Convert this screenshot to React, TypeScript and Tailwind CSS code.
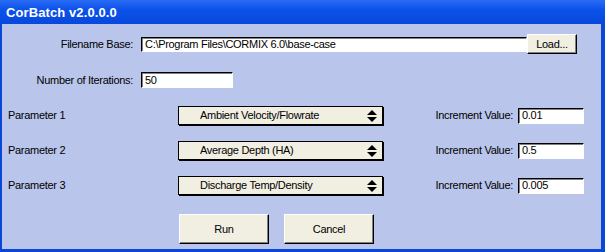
import React from "react";

const font = { fontFamily: '"Liberation Sans", Arial, sans-serif' };

function Arrows() {
  return (
    <svg width="10" height="12" viewBox="0 0 10 12" className="shrink-0">
      <polygon points="5,0 10,5 0,5" fill="#000" />
      <polygon points="0,7 10,7 5,12" fill="#000" />
    </svg>
  );
}

function Input({ value, className }: { value: string; className: string }) {
  return (
    <div
      className={
        "flex items-center bg-white border-t border-l border-black border-b border-r border-b-white border-r-white shadow-[inset_1px_1px_0_#808080] pl-[3px] text-[11px] tracking-[-0.3px] text-black leading-none " +
        className
      }
    >
      {value}
    </div>
  );
}

function Select({ label }: { label: string }) {
  return (
    <div className="w-[205px] h-[19px] flex items-center justify-between bg-[#f1eee2] border border-black shadow-[1px_1px_0_#000] pl-[21px] pr-[5px] text-[11px] tracking-[-0.3px] text-black leading-none">
      <span>{label}</span>
      <Arrows />
    </div>
  );
}

function Button({ label, className }: { label: string; className: string }) {
  return (
    <div
      className={
        "flex items-center justify-center bg-[#f1eee2] border border-white border-b-black border-r-black shadow-[inset_-1px_-1px_0_#808080] text-[11px] tracking-[-0.3px] text-black leading-none " +
        className
      }
    >
      {label}
    </div>
  );
}

function ParamRow({ n, sel, inc }: { n: number; sel: string; inc: string }) {
  return (
    <div className="flex items-center h-[19px] pl-[6px]">
      <div className="w-[170px] text-[11px] tracking-[-0.3px] text-black leading-none">Parameter {n}</div>
      <Select label={sel} />
      <div className="ml-[50px] w-[80px] text-right text-[11px] tracking-[-0.3px] text-black leading-none">Increment Value:</div>
      <Input value={inc} className="ml-[5px] w-[66px] h-[16px]" />
    </div>
  );
}

export default function App() {
  return (
    <div
      className="w-[605px] h-[252px] flex flex-col bg-[#0a46d8] overflow-hidden"
      style={font}
    >
      <div className="h-[24px] shrink-0 flex items-center pl-[6px] bg-[linear-gradient(180deg,#2a6cf5_0%,#0b52ea_40%,#0848dd_100%)]">
        <span className="text-white font-bold text-[13px] leading-none tracking-[0.1px]">CorBatch v2.0.0.0</span>
      </div>
      <div className="flex-1 ml-[2px] mr-[4px] mb-[3px] bg-[#b9c5ea] flex flex-col">
        <div className="flex items-center mt-[10px] h-[20px]">
          <div className="w-[131px] text-right text-[11px] tracking-[-0.3px] text-black leading-none">Filename Base:</div>
          <Input value="C:\Program Files\CORMIX 6.0\base-case" className="ml-[8px] w-[386px] h-[15px]" />
          <Button label="Load..." className="w-[50px] h-[20px]" />
        </div>
        <div className="flex items-center mt-[18px] h-[16px]">
          <div className="w-[131px] text-right text-[11px] tracking-[-0.3px] text-black leading-none">Number of Iterations:</div>
          <Input value="50" className="ml-[8px] w-[92px] h-[16px]" />
        </div>
        <div className="flex flex-col gap-[16px] mt-[18px]">
          <ParamRow n={1} sel="Ambient Velocity/Flowrate" inc="0.01" />
          <ParamRow n={2} sel="Average Depth (HA)" inc="0.5" />
          <ParamRow n={3} sel="Discharge Temp/Density" inc="0.005" />
        </div>
        <div className="flex mt-[19px] pl-[177px] gap-[15px]">
          <Button label="Run" className="w-[90px] h-[30px]" />
          <Button label="Cancel" className="w-[90px] h-[30px]" />
        </div>
      </div>
    </div>
  );
}
